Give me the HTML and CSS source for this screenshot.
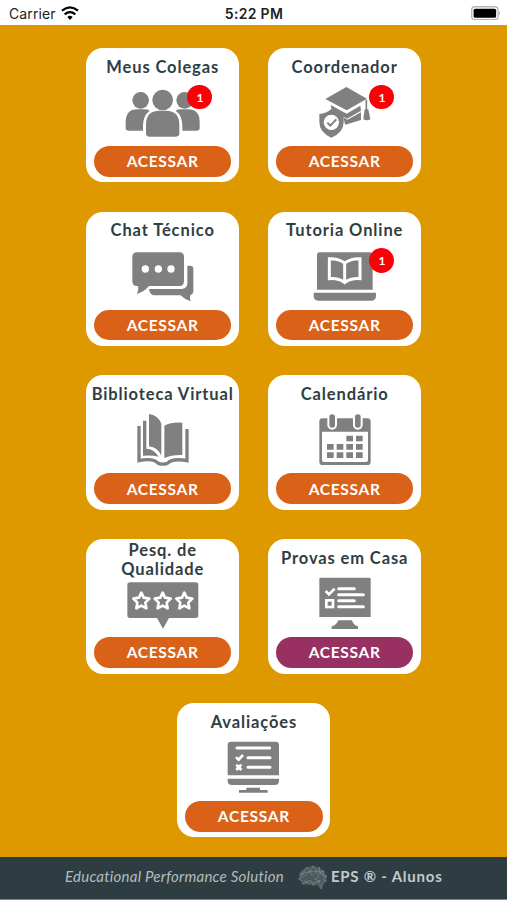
FILE: index.html
```html
<!DOCTYPE html>
<html lang="pt-BR">
<head>
<meta charset="utf-8">
<title>EPS - Alunos</title>
<link rel="stylesheet" href="styles.css">
</head>
<body>
<header class="status">
  <div class="carrier">Carrier
    <svg class="wifi" viewBox="0 0 54 42"><path d="M27 42l-8-9q8-7 16 0z"/><path d="M3 14q24-20 48 0M11 25q16-13 32 0" fill="none" stroke="#000" stroke-width="7"/></svg>
  </div>
  <div class="time">5:22 PM</div>
  <svg class="battery" viewBox="0 0 92 44"><rect x="2" y="2" width="81" height="40" rx="10" fill="#fff" stroke="#b5b5b5" stroke-width="4"/><rect x="8" y="8" width="69" height="28" rx="5"/><path d="M86 16q6 6 0 13z" fill="#aaa"/></svg>
</header>
<main class="grid">
  <section class="card">
    <h2>Meus Colegas</h2>
    <svg class="icon" viewBox="19 141 459 177"><circle cx="183" cy="181" r="25"/><circle cx="315" cy="181" r="25"/><path d="M138 264v-17q0-39 35-39h20q13 0 17 4-20 15-20 45v15h-43q-9 0-9-8zM360 264v-17q0-39-35-39h-20q-13 0-17 4 20 15 20 45v15h43q9 0 9-8z"/><circle cx="249" cy="180" r="31"/><path d="M199 280v-26q0-42 40-42h20q40 0 40 42v26q0 10-10 10h-80q-10 0-10-10z"/></svg>
    <span class="badge">1</span>
    <button>ACESSAR</button>
  </section>
  <section class="card">
    <h2>Coordenador</h2>
    <svg class="icon" viewBox="25 141 459 177"><path d="M197 177l63-36 62 35-61 35z"/><path d="M213 195l48 26 41-24 2 15-42 24-46-26zM251 232l12 7 41-22v10l-48 26zM258 247l46-21v14l-47 14z"/><path d="M320 180v30" stroke="#808080" stroke-width="5"/><path d="M315 208h11l6 30q-9 6-21 0z"/><path d="M215 207q17 14 37 15v24q0 32-37 47-36-16-36-47v-24q21-1 36-15z"/><circle cx="215" cy="247" r="23" fill="#fff"/><path d="M203 248l9 9 18-19" fill="none" stroke="#808080" stroke-width="6"/></svg>
    <span class="badge">1</span>
    <button>ACESSAR</button>
  </section>
  <section class="card">
    <h2>Chat Técnico</h2>
    <svg class="icon" viewBox="19 137 459 177"><path d="M172 141h127q14 0 14 14v73q0 14-14 14h-91q-14 17-37 24 7-12 4-24h-3q-14 0-14-14v-73q0-14 14-14z"/><g fill="#fff"><circle cx="197" cy="191" r="11"/><circle cx="236" cy="191" r="11"/><circle cx="274" cy="191" r="11"/></g><path d="M323 181h8q10 0 10 10v66q0 10-9 12-3 9 1 19-19-6-30-18h-81q-11-2-14-19h99q16-2 16-17z"/></svg>
    <button>ACESSAR</button>
  </section>
  <section class="card">
    <h2>Tutoria Online</h2>
    <svg class="icon" viewBox="25 137 459 177"><path d="M180 141h151q8 0 8 8v104H172V149q0-8 8-8zM162 262h187v9q0 15-15 15H177q-15 0-15-15z"/><path d="M255 173q-18-14-46-13v60q28-2 46 12 18-14 46-12v-60q-28-1-46 13v57" fill="none" stroke="#fff" stroke-width="9"/></svg>
    <span class="badge">1</span>
    <button>ACESSAR</button>
  </section>
  <section class="card">
    <h2>Biblioteca Virtual</h2>
    <svg class="icon" viewBox="19 133 459 177"><path d="M208 133q27 3 37 29v96q-11-25-37-28zM254 168q20-11 54-9v97q-32-1-54 9zM190 153h10v84q22 0 37 24-18-5-47-3z"/><path d="M178 169v104q42-9 58 8 13 5 27 0 16-16 59-8v-95" fill="none" stroke="#808080" stroke-width="10"/></svg>
    <button>ACESSAR</button>
  </section>
  <section class="card">
    <h2>Calendário</h2>
    <svg class="icon" viewBox="25 133 459 177"><rect x="179" y="146" width="154" height="140" rx="10"/><path d="M187 186h138v85q0 6-6 6H193q-6 0-6-6z" fill="#fff"/><g stroke="#fff" stroke-width="6"><rect x="206" y="131" width="23" height="46" rx="11"/><rect x="283" y="131" width="23" height="46" rx="11"/></g><path d="M260 198h20v17h-20zM289 198h20v17h-20zM202 223h20v17h-20zM231 223h20v17h-20zM260 223h20v17h-20zM289 223h20v17h-20zM202 248h20v17h-20zM231 248h20v17h-20zM260 248h20v17h-20zM289 248h20v17h-20z"/></svg>
    <button>ACESSAR</button>
  </section>
  <section class="card">
    <h2 class="two-line">Pesq. de Qualidade</h2>
    <svg class="icon" viewBox="19 135 459 177"><path d="M151 148h197q8 0 8 8v91q0 8-8 8h-80l-18 32-18-32h-81q-8 0-8-8v-91q0-8 8-8z"/><g fill="none" stroke="#fff" stroke-width="8" stroke-linejoin="round"><path id="star" d="M185 179l7 15 17 3-12 12 3 17-15-8-15 8 3-17-12-12 17-3z"/><use href="#star" x="64"/><use href="#star" x="129"/></g></svg>
    <button>ACESSAR</button>
  </section>
  <section class="card">
    <h2>Provas em Casa</h2>
    <svg class="icon" viewBox="25 135 459 177"><path d="M183 134h146q4 0 4 4v114H179V138q0-4 4-4zM236 262h41q3 14 18 18v8h-79v-8q16-4 20-18z"/><g fill="none" stroke="#fff"><path d="M198 174l10 10 17-17" stroke-width="8"/><rect x="200" y="202" width="20" height="20" stroke-width="8"/><path d="M237 167h47M237 185h74M237 203h47M237 221h74" stroke-width="9" stroke-linecap="round"/></g></svg>
    <button class="plum">ACESSAR</button>
  </section>
  <section class="card last">
    <h2>Avaliações</h2>
    <svg class="icon" viewBox="23 141 459 177"><path d="M185 140h134q10 0 10 10v91H175v-91q0-10 10-10zM175 251h154v6q0 13-13 13H188q-13 0-13-13zM231 278h41v7h23v8h-86v-8h22z"/><g fill="none" stroke="#fff"><path d="M203 159h98M236 188h66M236 217h66" stroke-width="9" stroke-linecap="round"/><path d="M200 187l8 7 13-14" stroke-width="8"/><path d="M201 209l15 16M216 209l-15 16" stroke-width="8"/></g><path d="M202 210h13v13h-13z" fill="#fff"/></svg>
    <button>ACESSAR</button>
  </section>
</main>
<footer class="footer">
  <em>Educational Performance Solution</em>
  <svg class="brain" viewBox="0 0 90 75"><path d="M3 32l8-16 15-10 19-4 19 5 13 10 10 17-2 13-7 10-8 16-9-13-15 2-14-4-17 2-4-11-9-4z" fill="#4b595d"/><path d="M3 32l15-9 8-17 12 15 7-19 11 17 8-12 1 18 12-8-3 17 13 0-12 11 10 2-15 10 0 16-9-13 2-13-13 9-4 6-5-11-9 7-4-10-13 9-4-11-9-4 13-8-8-11 17 9 10-14 8 14 14-12 7 14-13 9 18 5-22 6-10-8-12 8-6-9M11 16l7 7 20-2 18-2 21 0-12 6 22 9" fill="none" stroke="#8b979a" stroke-width="1.5"/></svg>
  <strong>EPS ® - Alunos</strong>
</footer>
</body>
</html>
```
FILE: styles.css
```css
* { box-sizing: border-box; }
body {
  margin: 0;
  height: 900px;
  display: flex;
  flex-direction: column;
  background: #de9900;
  font-family: Lato, sans-serif;
  overflow: hidden;
}
.status {
  height: 25.4px;
  flex: none;
  display: grid;
  grid-template-columns: 1fr auto 1fr;
  align-items: center;
  padding: 2px 6px 0 9px;
  background: #fff;
  color: #222;
  font: 14px/20px Inter, sans-serif;
}
.carrier { display: flex; align-items: center; gap: 5px; letter-spacing: 0.1px; }
.wifi { width: 18px; height: 14px; margin-top: -2px; }
.time { font-weight: 600; letter-spacing: 0.3px; margin-right: 2px; }
.battery { width: 30px; height: 14.5px; justify-self: end; margin-top: -1px; }
.grid {
  flex: 1;
  display: grid;
  grid-template-columns: 153px 153px;
  grid-auto-rows: 134.4px;
  gap: 29.35px 29px;
  justify-content: center;
  padding: 22.6px 0 0 0.4px;
}
.card {
  position: relative;
  display: flex;
  flex-direction: column;
  align-items: center;
  background: #fff;
  border-radius: 17px;
}
.last { grid-column: 1 / 3; justify-self: center; margin-left: 0.4px; }
h2 {
  margin: 0;
  width: 100%;
  height: 39px;
  display: flex;
  align-items: center;
  justify-content: center;
  text-align: center;
  font-size: 16.5px;
  line-height: 19.5px;
  font-weight: 700;
  letter-spacing: 0.88px;
  color: #2f3e43;
}
.two-line { padding: 3px 30px 0; }
.icon { width: 153px; height: 59px; flex: none; overflow: visible; fill: #808080; }
button {
  width: 137.6px;
  height: 30.6px;
  padding: 0;
  border: 0;
  border-radius: 16px;
  background: #d96218;
  color: #fff;
  font: 700 15.5px/30px Lato, sans-serif;
  letter-spacing: 0.7px;
}
.plum { background: #983162; }
.badge {
  position: absolute;
  left: 101.3px;
  top: 36.7px;
  width: 24.8px;
  height: 24.8px;
  border-radius: 50%;
  background: #fb0007;
  color: #fff;
  font-size: 12px;
  font-weight: 700;
  line-height: 25px;
  text-align: center;
}
.footer {
  flex: none;
  height: 43.4px;
  display: flex;
  align-items: center;
  padding: 0 0 3px 65px;
  background: #2e3d42;
  border-bottom: 1px solid #7c878a;
  color: #c1cacc;
  white-space: nowrap;
}
.footer em { font-size: 15px; letter-spacing: 0.25px; color: #b3bdbf; }
.brain { width: 30px; height: 25px; margin: 3px 3px 0 14px; }
.footer strong { font-size: 15px; letter-spacing: 0.78px; }
```
